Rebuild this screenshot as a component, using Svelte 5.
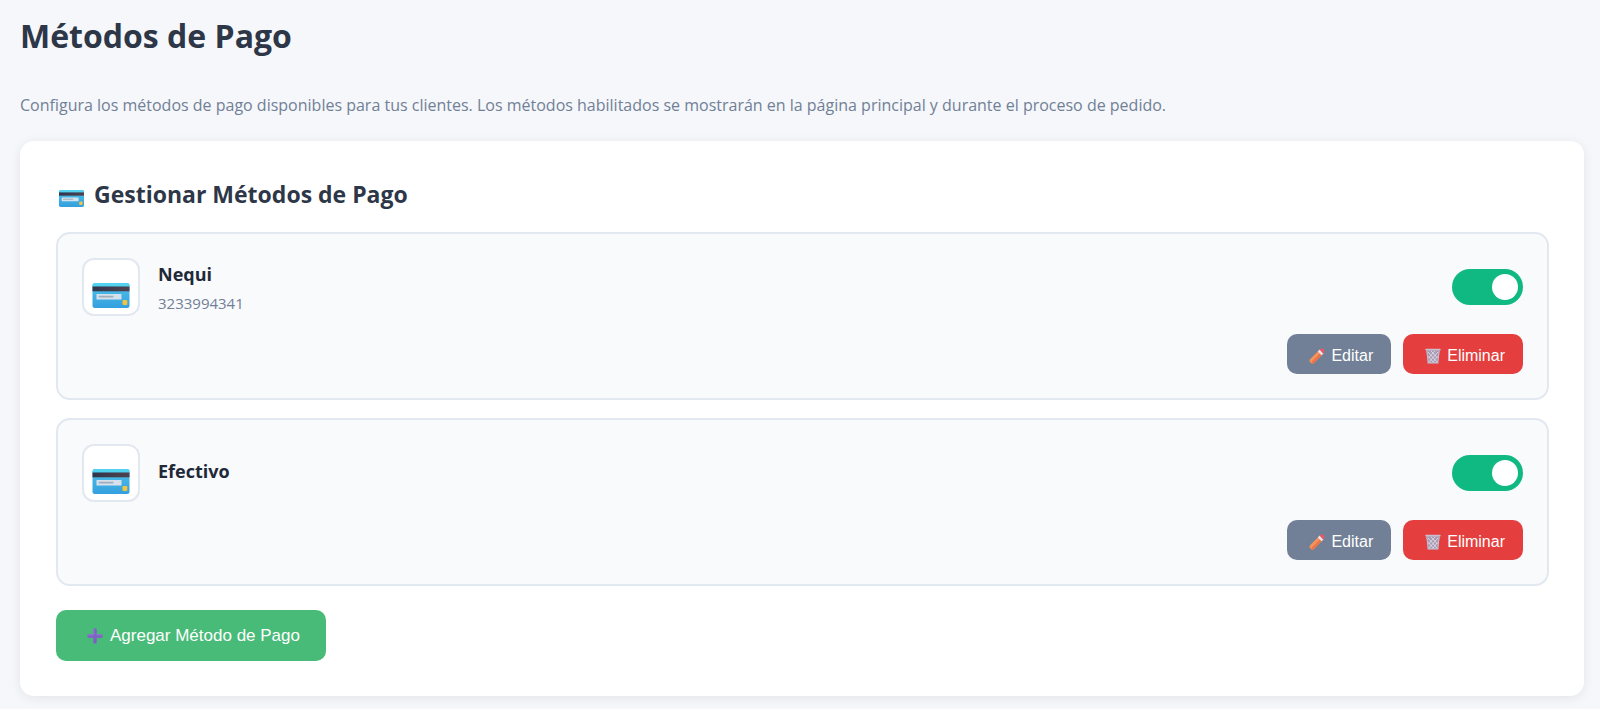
<script>
  let methods = $state([
    { id: 'nequi', name: 'Nequi', detail: '3233994341', enabled: true },
    { id: 'efectivo', name: 'Efectivo', detail: '', enabled: true }
  ]);
</script>

{#snippet cardIcon(cls)}
  <svg class={cls} viewBox="0 0 37 25" aria-hidden="true">
    <defs>
      <linearGradient id="card-blue" x1="0" y1="0" x2="0" y2="1">
        <stop offset="0" stop-color="#4fc3e8" />
        <stop offset="1" stop-color="#349fdf" />
      </linearGradient>
      <linearGradient id="card-band" x1="0" y1="0" x2="1" y2="0">
        <stop offset="0" stop-color="#30364c" />
        <stop offset="1" stop-color="#50424e" />
      </linearGradient>
    </defs>
    <rect width="37" height="25" rx="2.5" fill="url(#card-blue)" />
    <path d="M0 2.5A2.5 2.5 0 0 1 2.5 0h32A2.5 2.5 0 0 1 37 2.5v1H0z" fill="#52d2ef" />
    <rect y="3.500" width="37" height="4.800" fill="url(#card-band)" />
    <rect x="4" y="11" width="25" height="5.500" rx=".6" fill="#d5e1ec" />
    <rect x="6" y="12.800" width="15" height="1.700" rx=".8" fill="#a2adbc" />
    <rect x="30" y="17" width="4.800" height="5" rx="1" fill="#f3c441" />
  </svg>
{/snippet}

<main class="page">
  <h1>Métodos de Pago</h1>
  <p class="intro">
    Configura los métodos de pago disponibles para tus clientes. Los métodos habilitados se mostrarán en la página principal y durante el proceso de pedido.
  </p>

  <section class="panel">
    <h2>{@render cardIcon('icon-title')} Gestionar Métodos de Pago</h2>

    <div class="list">
      {#each methods as method (method.id)}
        <article class="method">
          <div class="top">
            <div class="badge">{@render cardIcon('icon-badge')}</div>
            <div class="info">
              <h3>{method.name}</h3>
              {#if method.detail}
                <p class="detail">{method.detail}</p>
              {/if}
            </div>
            <label class="toggle">
              <input type="checkbox" aria-label={method.name} bind:checked={method.enabled} />
              <span class="track"></span>
            </label>
          </div>
          <div class="actions">
            <button type="button" class="edit">
              <svg class="icon-small" viewBox="0 0 16 16" aria-hidden="true">
                <path d="M.8 11.500 9.800 2.500l3.800 3.800-9 9c-.9.700-2 .4-2.900-.5-1-.9-1.500-2.300-.9-3.300z" fill="#f5945a" />
                <path d="m2.800 13.500 9-9 1.800 1.800-9 9c-.7.500-1.500.5-2.300.1z" fill="#ee7448" />
                <path d="m8.800 3.500 1.900-1.900 3.800 3.800-1.900 1.900z" fill="#ece3e9" />
                <path d="m10.700 1.600.6-.6c.9-.9 2.100-.7 3.200.3 1 1 1.200 2.400.4 3.200l-.9.900z" fill="#ef5665" />
              </svg>
              Editar
            </button>
            <button type="button" class="delete">
              <svg class="icon-small" viewBox="0 0 16 16" aria-hidden="true">
                <path d="M1.400 2h13.200l-1.500 13.200H2.900z" fill="#a59bb3" />
                <path d="m3 4 9 10M6 3l6.500 7M3.500 8.500l5 6M13 4 4 14M10 3l-6.500 7M12.500 8.500l-5 6" stroke="#e3d9e4" fill="none" stroke-width=".9" />
                <path d="m1.800 3 1.400 11.500h9.600L14.200 3" stroke="#c8bdd0" fill="none" stroke-width="1" />
                <rect x=".3" y=".7" width="15.400" height="1.800" rx=".8" fill="#c9bfd0" />
                <rect x="2.500" y="14" width="11" height="1.600" rx=".7" fill="#c2b8c9" />
              </svg>
              Eliminar
            </button>
          </div>
        </article>
      {/each}
    </div>

    <button type="button" class="add">
      <svg class="icon-add" viewBox="0 0 16 16" aria-hidden="true">
        <path d="M7 .5h2q.7 0 .7.7v5.100h5.100q.7 0 .7.7v2q0 .7-.7.7H9.700v5.100q0 .7-.7.700H7q-.7 0-.7-.7V9.700H1.200q-.7 0-.7-.7V7q0-.7.7-.7h5.100V1.200q0-.7.7-.7z" fill="#7f5fc6" />
        <path d="M7 1v6H1M9.500 7H15" stroke="#9a78d8" fill="none" />
      </svg>
      Agregar Método de Pago
    </button>
  </section>
</main>

<style>
  :global(body) {
    margin: 0;
    background: #f5f7fb;
  }
  .page {
    padding: 12px 16px 12px 20px;
    font-family: 'Segoe UI', 'Open Sans', 'Noto Sans', sans-serif;
    color: #2d3748;
  }
  h1, h2, h3, p {
    margin: 0;
  }
  h1 {
    font-size: 32px;
    line-height: 48px;
    font-weight: 700;
  }
  .intro {
    margin-top: 32px;
    font-size: 16px;
    line-height: 26px;
    color: #718096;
  }
  .panel {
    margin-top: 23px;
    padding: 36px 35px 35px 36px;
    background: #fff;
    border-radius: 14px;
    box-shadow: 0 2px 12px rgba(0, 0, 0, 0.08);
  }
  h2 {
    display: flex;
    align-items: center;
    gap: 10px;
    padding-left: 3px;
    font-size: 23px;
    line-height: 34px;
    font-weight: 700;
  }
  .icon-title {
    width: 25px;
    height: 17px;
    margin-top: 8px;
  }
  .list {
    display: flex;
    flex-direction: column;
    gap: 18px;
    margin-top: 21px;
  }
  .method {
    padding: 24px;
    border: 2px solid #e2e8f0;
    border-radius: 14px;
    background: #f9fafc;
  }
  .top {
    display: flex;
    align-items: center;
    gap: 18px;
  }
  .badge {
    display: flex;
    align-items: center;
    justify-content: center;
    box-sizing: border-box;
    width: 58px;
    height: 58px;
    padding-top: 16px;
    border: 2px solid #e2e8f0;
    border-radius: 12px;
    background: #fff;
  }
  .icon-badge {
    width: 38px;
    height: 25px;
  }
  .info {
    flex: 1;
  }
  h3 {
    font-size: 18px;
    line-height: 28px;
    font-weight: 700;
    color: #1f2937;
  }
  .info h3:only-child {
    padding-bottom: 4px;
  }
  .detail {
    margin-top: 3px;
    font-size: 15px;
    line-height: 24px;
    color: #718096;
  }
  .toggle {
    display: block;
    cursor: pointer;
  }
  .toggle input {
    position: absolute;
    opacity: 0;
  }
  .track {
    display: flex;
    box-sizing: border-box;
    width: 71px;
    height: 36px;
    padding: 5px;
    border-radius: 18px;
    background: #cbd5e0;
  }
  .track::after {
    content: '';
    width: 26px;
    height: 26px;
    border-radius: 50%;
    background: #fff;
  }
  .toggle input:checked + .track {
    justify-content: flex-end;
    background: #10b981;
  }
  .toggle input:focus-visible + .track {
    outline: 2px solid #2d3748;
  }
  .actions {
    display: flex;
    justify-content: flex-end;
    gap: 12px;
    margin-top: 18px;
  }
  button {
    display: inline-flex;
    align-items: center;
    border: 0;
    border-radius: 10px;
    color: #fff;
    font-family: 'Liberation Sans', Arial, sans-serif;
    cursor: pointer;
  }
  .actions button {
    gap: 6px;
    height: 40px;
    padding: 3px 18px 0 22px;
    font-size: 16px;
  }
  .edit {
    background: #718096;
  }
  .delete {
    background: #e53e3e;
  }
  .icon-small {
    width: 16px;
    height: 16px;
  }
  .add {
    gap: 7px;
    height: 51px;
    margin-top: 24px;
    padding: 0 26px 0 31px;
    font-size: 17px;
    background: #48bb78;
  }
  .icon-add {
    width: 16px;
    height: 16px;
  }
</style>
